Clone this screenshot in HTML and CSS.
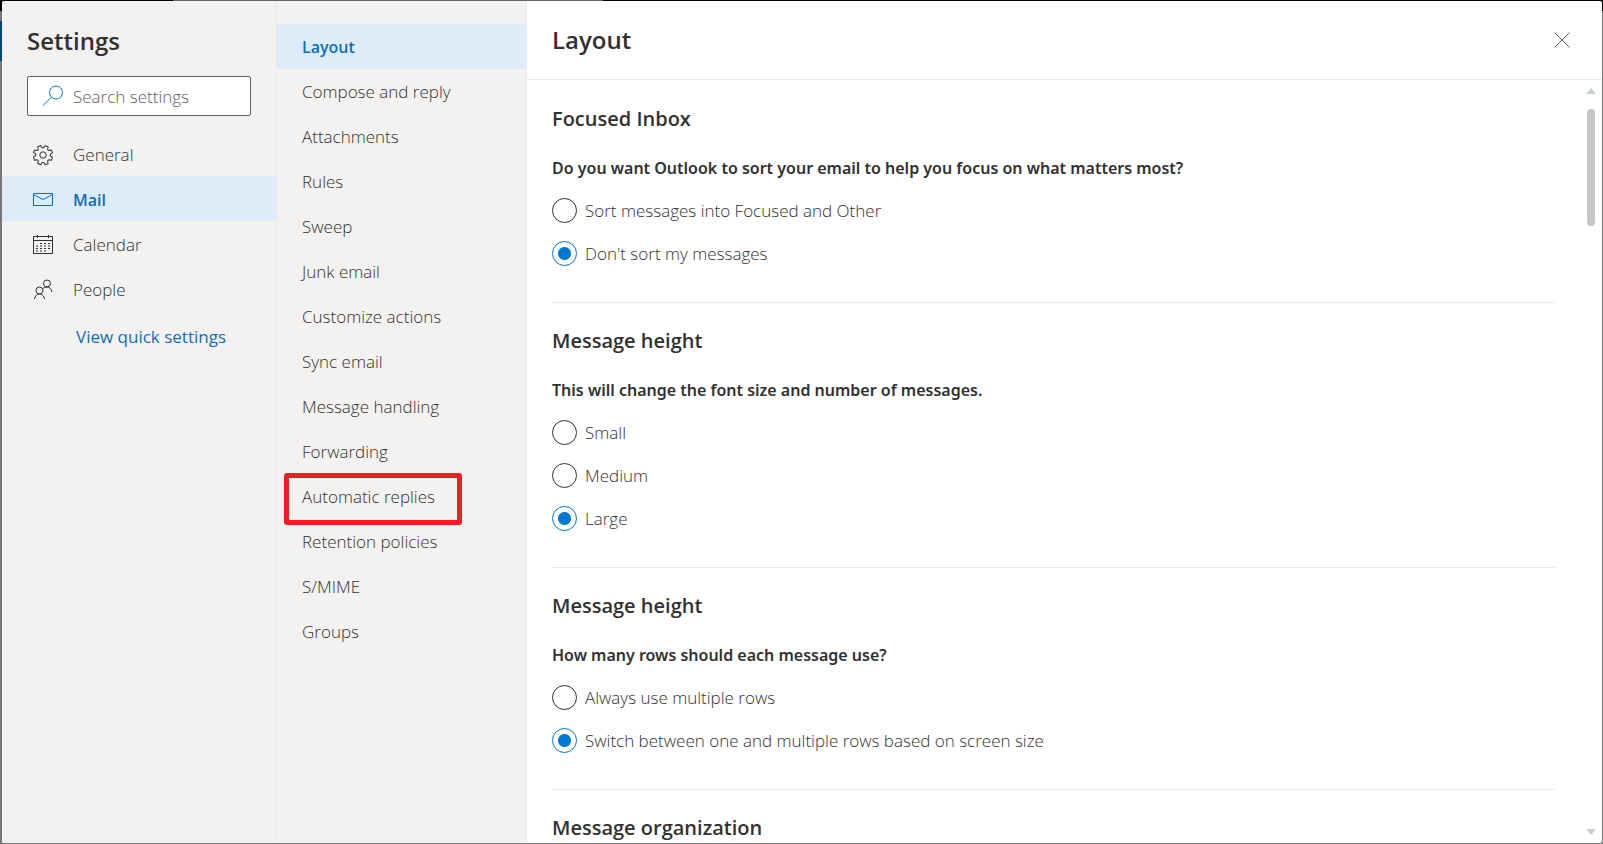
FILE: index.html
```
<!DOCTYPE html>
<html lang="en">
<head>
    <meta charset="UTF-8">
    <meta name="viewport" content="width=device-width, initial-scale=1.0">
    <title>Settings</title>
    <link rel="stylesheet" href="styles.css">
</head>
<body>
    <div class="settings">
        <aside class="categories">
            <h1>Settings</h1>

            <label class="search">
                <svg width="22" height="22" viewBox="0 0 22 22">
                    <circle cx="14" cy="7.5" r="6.5"/>
                    <path d="M9.4 12.1 1 20.5"/>
                </svg>
                <input type="text" placeholder="Search settings" aria-label="Search settings">
            </label>

            <nav class="category-list">
                <a href="#general">
                    <svg width="22" height="22" viewBox="0 0 22 22">
                        <circle cx="11" cy="11" r="3.2"/>
                        <path stroke-linejoin="round" transform="rotate(22.5 11 11)" d="M9.4 1.5h3.2l.5 2.6 1.5.6 2.2-1.5 2.2 2.2-1.5 2.3.6 1.4 2.6.5v3.1l-2.6.5-.6 1.5 1.5 2.2-2.2 2.2-2.2-1.5-1.5.6-.5 2.6H9.4l-.5-2.6-1.5-.6-2.2 1.5L3 16.4l1.5-2.2-.6-1.5-2.6-.5V9.6l2.6-.5.6-1.4L3 5.4l2.2-2.2 2.2 1.5 1.5-.6z"/>
                    </svg>
                    General
                </a>
                <a href="#mail" class="active">
                    <svg width="22" height="22" viewBox="0 0 22 22">
                        <path d="M1.5 4.5h19v12h-19zM1.5 5.500 11 10.500l9.500-5"/>
                    </svg>
                    Mail
                </a>
                <a href="#calendar">
                    <svg width="22" height="22" viewBox="0 0 22 22">
                        <path d="M1.5 2.5h19v17h-19zM1.5 6.5h19M5.5 1v3M16.5 1v3"/>
                        <path stroke-dasharray="2 2" d="M8 9.5h10M4 12h14M4 14.5h14M4 17h10"/>
                    </svg>
                    Calendar
                </a>
                <a href="#people">
                    <svg width="22" height="22" viewBox="0 0 22 22">
                        <circle cx="7.5" cy="11.5" r="3.5"/>
                        <circle cx="15" cy="4.5" r="3.5"/>
                        <path d="M2.5 20c.5-3 2.5-5 5-5s4.5 2 5 5M11 9.5C12 8.5 13.5 8 15 8c2.5 0 4.5 2 5 5"/>
                    </svg>
                    People
                </a>
            </nav>

            <a href="#quick" class="quick">View quick settings</a>
        </aside>

        <nav class="pages">
            <a href="#layout" class="active">Layout</a>
            <a href="#compose">Compose and reply</a>
            <a href="#attachments">Attachments</a>
            <a href="#rules">Rules</a>
            <a href="#sweep">Sweep</a>
            <a href="#junk">Junk email</a>
            <a href="#customize">Customize actions</a>
            <a href="#sync">Sync email</a>
            <a href="#handling">Message handling</a>
            <a href="#forwarding">Forwarding</a>
            <a href="#replies" class="marked">Automatic replies</a>
            <a href="#retention">Retention policies</a>
            <a href="#smime">S/MIME</a>
            <a href="#groups">Groups</a>
        </nav>

        <main class="panel">
            <header>
                <h1>Layout</h1>
                <button class="close" aria-label="Close">
                    <svg width="16" height="16" viewBox="0 0 16 16">
                        <path d="M.5.5l15 15M15.5.5l-15 15"/>
                    </svg>
                </button>
            </header>

            <div class="scroller">
                <div class="content">
                    <section>
                        <h2>Focused Inbox</h2>
                        <h3>Do you want Outlook to sort your email to help you focus on what matters most?</h3>
                        <label><input type="radio" name="focused">Sort messages into Focused and Other</label>
                        <label><input type="radio" name="focused" checked>Don't sort my messages</label>
                    </section>

                    <section>
                        <h2>Message height</h2>
                        <h3>This will change the font size and number of messages.</h3>
                        <label><input type="radio" name="height">Small</label>
                        <label><input type="radio" name="height">Medium</label>
                        <label><input type="radio" name="height" checked>Large</label>
                    </section>

                    <section>
                        <h2>Message height</h2>
                        <h3>How many rows should each message use?</h3>
                        <label><input type="radio" name="rows">Always use multiple rows</label>
                        <label><input type="radio" name="rows" checked>Switch between one and multiple rows based on screen size</label>
                    </section>

                    <section>
                        <h2>Message organization</h2>
                    </section>
                </div>

                <div class="scrollbar">
                    <svg width="10" height="6" viewBox="0 0 10 6"><path d="M0 6 5 0l5 6z"/></svg>
                    <div class="thumb"></div>
                    <svg width="10" height="6" viewBox="0 0 10 6"><path d="M0 0l5 6 5-6z"/></svg>
                </div>
            </div>
        </main>
    </div>
</body>
</html>
```
FILE: styles.css
```
* {
    box-sizing: border-box;
}

body {
    margin: 0;
    height: 100vh;
    padding: 1px 1px 1px 2px;
    overflow: hidden;
    /* the dimmed mailbox behind the dialog */
    background:
        linear-gradient(#666, #666) 173px 0 / 430px 1px no-repeat,
        linear-gradient(#004578, #004578) 0 21px / 2px 40px no-repeat,
        linear-gradient(#000 11px, #777 11px);
    color: #323130;
    font-family: "Open Sans", "Noto Sans", sans-serif;
    font-size: 17px;
    font-weight: 300;
    line-height: 24px;
}

h1, h2, h3 {
    margin: 0;
    font-weight: 600;
}

h1 {
    font-size: 24px;
    line-height: 32px;
}

h2 {
    font-size: 20px;
    line-height: 28px;
}

h3 {
    font-family: "Noto Sans", sans-serif;
    font-size: 16px;
    line-height: 24px;
}

a {
    color: inherit;
    text-decoration: none;
}

svg {
    fill: none;
    stroke: currentColor;
    flex: none;
}

.settings {
    display: flex;
    height: 100%;
    background: #fff;
    border-radius: 2px;
    overflow: hidden;
}

.categories {
    flex: none;
    width: 275px;
    padding-top: 24px;
    background: #f3f2f1;
    border-right: 1px solid #eaeaea;
}

.categories h1 {
    padding-left: 25px;
}

.search {
    display: flex;
    align-items: center;
    gap: 9px;
    height: 40px;
    margin: 19px 25px 15px;
    padding-left: 14px;
    background: #fff;
    border: 1px solid #605e5c;
    border-radius: 2px;
    color: #0078d4;
}

.search input {
    width: 100%;
    min-width: 0;
    padding: 2px 0 0;
    border: 0;
    outline: 0;
    background: none;
    font: inherit;
}

.search input::placeholder {
    color: #605e5c;
}

.category-list a {
    display: flex;
    align-items: center;
    gap: 19px;
    height: 45px;
    padding: 2px 0 0 30px;
}

.category-list .active,
.pages .active {
    background: #deecf9;
    color: #0f6cbd;
    font-size: 16px;
    font-weight: 600;
}

.quick {
    display: block;
    margin-top: 14px;
    padding-left: 74px;
    color: #0f6cbd;
    font-weight: 400;
}

.pages {
    flex: none;
    width: 250px;
    padding-top: 23px;
    background: #f3f2f1;
    border-right: 1px solid #eaeaea;
}

.pages a {
    display: flex;
    align-items: center;
    height: 45px;
    padding-left: 25px;
}

.pages .marked {
    position: relative;
}

.marked::after {
    content: "";
    position: absolute;
    top: -1px;
    left: 7px;
    width: 178px;
    height: 52px;
    box-sizing: border-box;
    border: 5px solid #ee1c25;
    border-radius: 3px;
}

.panel {
    flex: 1;
    display: flex;
    flex-direction: column;
    min-width: 0;
}

.panel header {
    flex: none;
    display: flex;
    align-items: center;
    justify-content: space-between;
    height: 79px;
    padding: 0 32px 0 25px;
    border-bottom: 1px solid #eaeaea;
}

.close {
    display: flex;
    padding: 0;
    border: 0;
    background: none;
    color: #605e5c;
}

.scroller {
    flex: 1;
    display: flex;
    min-height: 0;
}

.content {
    flex: 1;
    padding: 1px 24px 0 25px;
    overflow: hidden;
}

.content section {
    padding: 24px 0 36px;
    border-bottom: 1px solid #eaeaea;
}

.content h3 {
    margin-top: 23px;
}

.content label {
    display: flex;
    align-items: center;
    gap: 8px;
    height: 25px;
    margin-top: 18px;
}

.content input {
    appearance: none;
    flex: none;
    width: 25px;
    height: 25px;
    margin: 0;
    border: 1px solid #323130;
    border-radius: 50%;
}

.content input:checked {
    border-color: #0078d4;
    background: radial-gradient(circle, #0078d4 6px, transparent 7px);
}

.scrollbar {
    flex: none;
    display: flex;
    flex-direction: column;
    align-items: center;
    width: 23px;
    padding: 8px 0;
}

.scrollbar svg {
    fill: #c8d0d4;
    stroke: none;
}

.thumb {
    width: 8px;
    height: 117px;
    margin: 15px 0 auto;
    border-radius: 4px;
    background: #c8c6c4;
}
```
